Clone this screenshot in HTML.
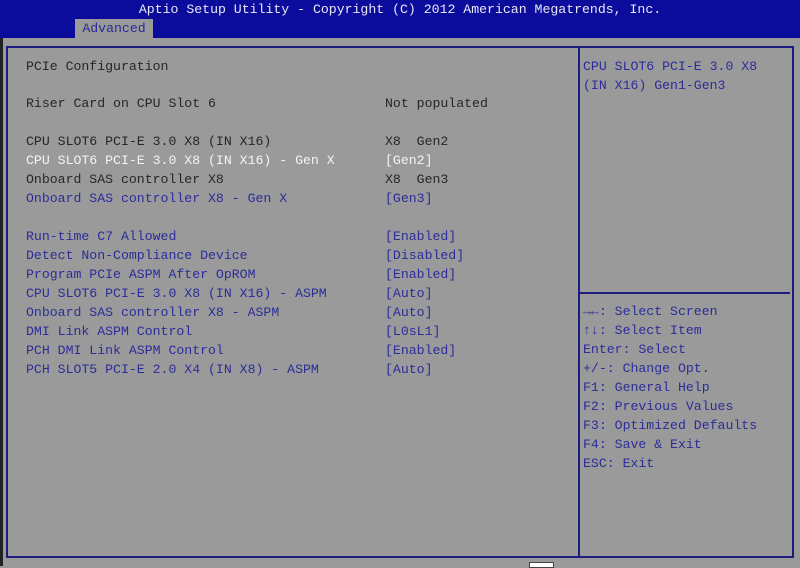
<!DOCTYPE html>
<html><head><style>
html,body{margin:0;padding:0}
body{width:800px;height:566px;background:#9a9a9a;position:relative;overflow:hidden;font-family:"Liberation Mono","DejaVu Sans Mono",monospace;font-size:13.2px;}
.hdr{position:absolute;left:0;top:0;width:800px;height:38px;background:#0c0c9c;}
.title{position:absolute;left:0;top:1px;width:800px;text-align:center;color:#e8e8f4;line-height:18px;}
.tab{position:absolute;left:75px;top:19px;width:78px;height:19px;background:#9a9a9a;color:#2a2a98;line-height:19px;text-align:center;}
.lstrip{position:absolute;left:0;top:38px;width:3px;height:528px;background:#222;}
.box{position:absolute;left:6px;top:46px;width:784px;height:508px;border:2px solid #1c1c7c;}
.vdiv{position:absolute;left:578px;top:46px;width:2px;height:512px;background:#1c1c7c;}
.hdiv{position:absolute;left:580px;top:292px;width:210px;height:2px;background:#1c1c7c;}
.t{position:absolute;white-space:pre;line-height:19px;color:#262626;}
.w{color:#f4f4f4}.b{color:#2c2c9a}
.wb{position:absolute;left:529px;top:562px;width:23px;height:4px;background:#fff;border:1px solid #444;}
</style></head><body>
<div class="hdr"><div class="title">Aptio Setup Utility - Copyright (C) 2012 American Megatrends, Inc.</div><div class="tab">Advanced</div></div>
<div class="lstrip"></div>
<div class="box"></div><div class="vdiv"></div><div class="hdiv"></div>
<div class="t" style="left:26px;top:57px">PCIe Configuration</div>
<div class="t" style="left:26px;top:94px">Riser Card on CPU Slot 6</div><div class="t" style="left:385px;top:94px">Not populated</div>
<div class="t" style="left:26px;top:132px">CPU SLOT6 PCI-E 3.0 X8 (IN X16)</div><div class="t" style="left:385px;top:132px">X8  Gen2</div>
<div class="t w" style="left:26px;top:151px">CPU SLOT6 PCI-E 3.0 X8 (IN X16) - Gen X</div><div class="t w" style="left:385px;top:151px">[Gen2]</div>
<div class="t" style="left:26px;top:170px">Onboard SAS controller X8</div><div class="t" style="left:385px;top:170px">X8  Gen3</div>
<div class="t b" style="left:26px;top:189px">Onboard SAS controller X8 - Gen X</div><div class="t b" style="left:385px;top:189px">[Gen3]</div>
<div class="t b" style="left:26px;top:227px">Run-time C7 Allowed</div><div class="t b" style="left:385px;top:227px">[Enabled]</div>
<div class="t b" style="left:26px;top:246px">Detect Non-Compliance Device</div><div class="t b" style="left:385px;top:246px">[Disabled]</div>
<div class="t b" style="left:26px;top:265px">Program PCIe ASPM After OpROM</div><div class="t b" style="left:385px;top:265px">[Enabled]</div>
<div class="t b" style="left:26px;top:284px">CPU SLOT6 PCI-E 3.0 X8 (IN X16) - ASPM</div><div class="t b" style="left:385px;top:284px">[Auto]</div>
<div class="t b" style="left:26px;top:303px">Onboard SAS controller X8 - ASPM</div><div class="t b" style="left:385px;top:303px">[Auto]</div>
<div class="t b" style="left:26px;top:322px">DMI Link ASPM Control</div><div class="t b" style="left:385px;top:322px">[L0sL1]</div>
<div class="t b" style="left:26px;top:341px">PCH DMI Link ASPM Control</div><div class="t b" style="left:385px;top:341px">[Enabled]</div>
<div class="t b" style="left:26px;top:360px">PCH SLOT5 PCI-E 2.0 X4 (IN X8) - ASPM</div><div class="t b" style="left:385px;top:360px">[Auto]</div>
<div class="t b" style="left:583px;top:57px">CPU SLOT6 PCI-E 3.0 X8
(IN X16) Gen1-Gen3</div>
<div class="t b" style="left:583px;top:302px">&#x2192;&#x2190;: Select Screen
&#x2191;&#x2193;: Select Item
Enter: Select
+/-: Change Opt.
F1: General Help
F2: Previous Values
F3: Optimized Defaults
F4: Save &amp; Exit
ESC: Exit</div>
<div class="wb"></div>
</body></html>
